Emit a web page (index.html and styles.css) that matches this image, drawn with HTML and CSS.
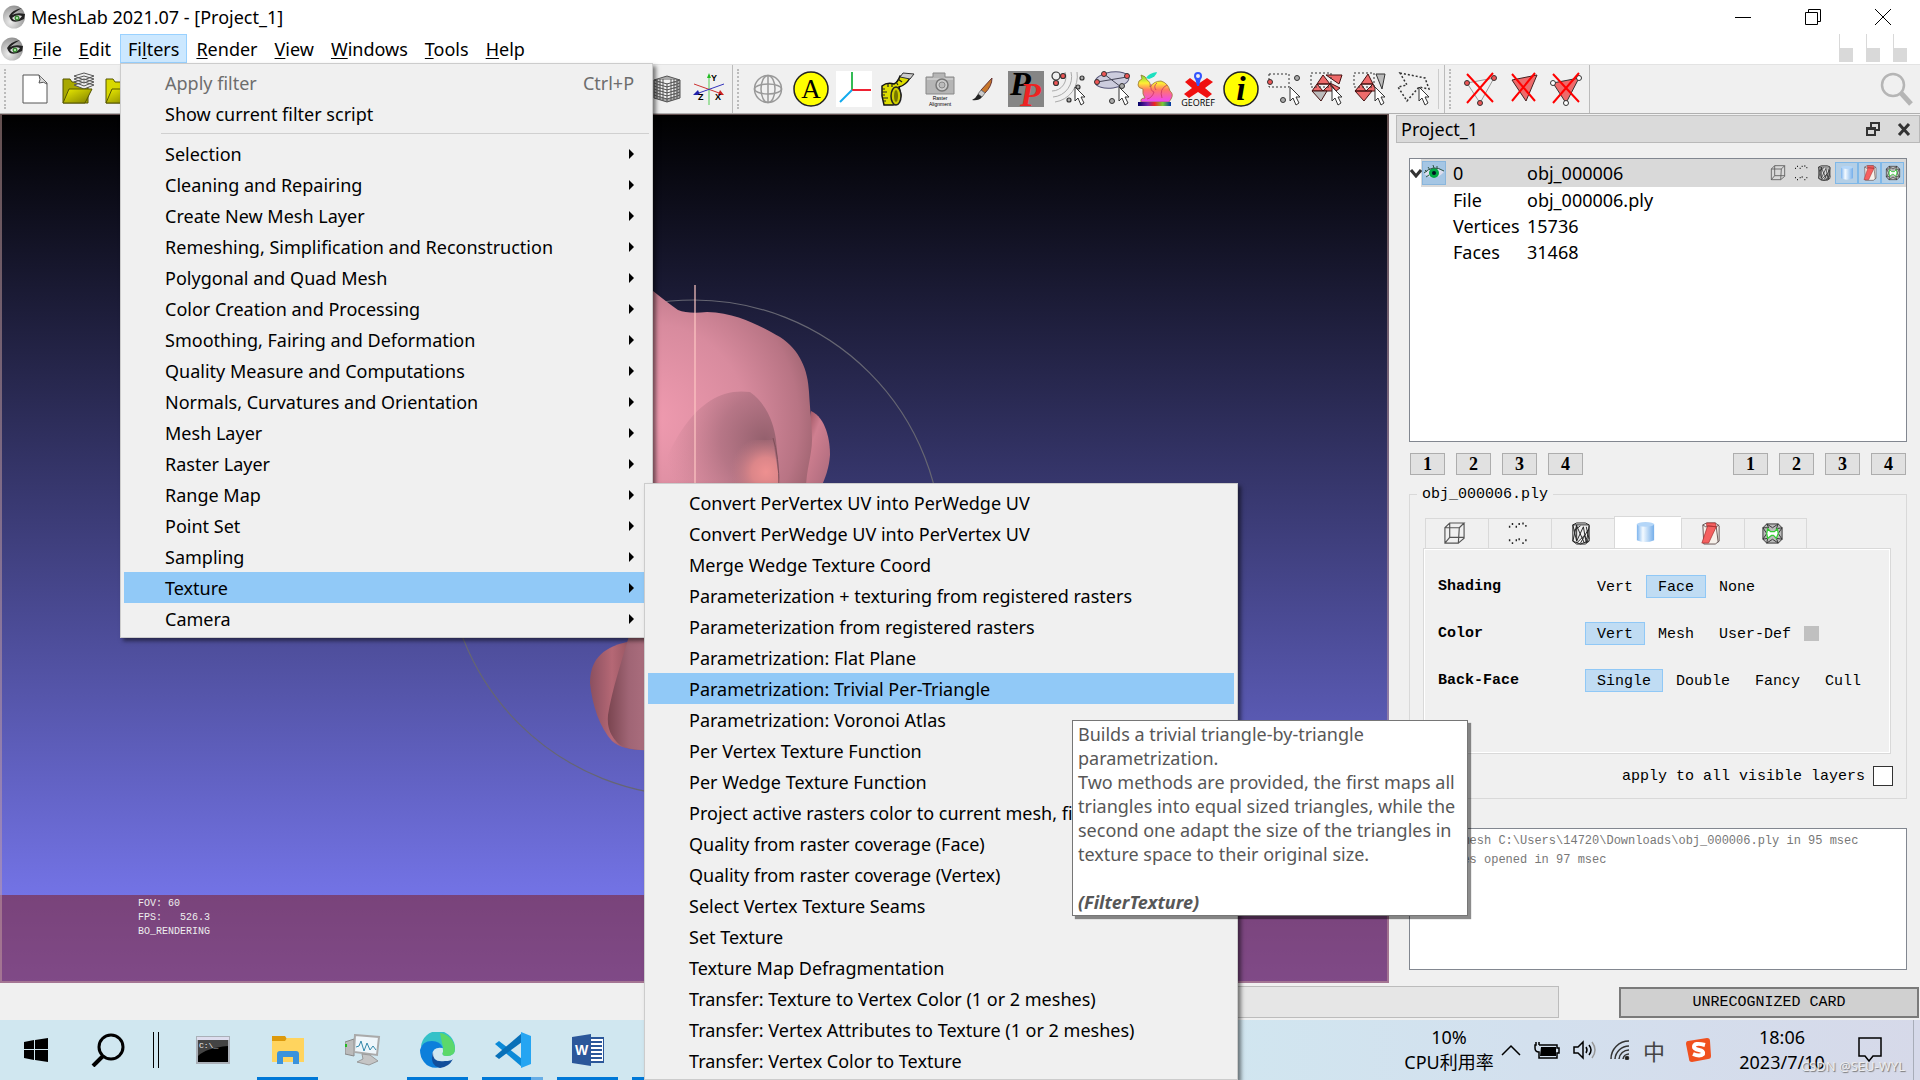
FILE: index.html
```html
<!DOCTYPE html>
<html lang="en">
<head>
    <meta charset="UTF-8">
    <meta name="viewport" content="width=device-width, initial-scale=1.0">
    <title>MeshLab 2021.07 - [Project_1]</title>
    <link rel="stylesheet" href="styles.css">
</head>
<body>
    <!-- shared icons -->
    <svg class="defs" width="0" height="0" aria-hidden="true">
        <defs>
            <radialGradient id="g-logo" cx="35%" cy="70%" r="80%">
                <stop offset="0" stop-color="#eee"/>
                <stop offset="1" stop-color="#888"/>
            </radialGradient>
            <linearGradient id="g-cyl">
                <stop offset="0" stop-color="#7db4ee"/>
                <stop offset=".35" stop-color="#f4faff"/>
                <stop offset="1" stop-color="#74aeea"/>
            </linearGradient>
            <linearGradient id="g-folder" x1="0" y1="0" x2="1" y2="1">
                <stop offset="0" stop-color="#eeee00"/>
                <stop offset="1" stop-color="#7d7d00"/>
            </linearGradient>
            <linearGradient id="g-hue">
                <stop offset="0" stop-color="#006"/>
                <stop offset=".3" stop-color="#72a"/>
                <stop offset=".5" stop-color="#e22"/>
                <stop offset=".75" stop-color="#7c3"/>
                <stop offset="1" stop-color="#03a"/>
            </linearGradient>
            <linearGradient id="g-bunny" x1="0" y1="0" x2="0" y2="1">
                <stop offset="0" stop-color="#7d3"/>
                <stop offset=".3" stop-color="#fe3"/>
                <stop offset=".55" stop-color="#f76"/>
                <stop offset="1" stop-color="#e4f"/>
            </linearGradient>
        </defs>
        <symbol id="logo" viewBox="0 0 24 24">
            <ellipse cx="12" cy="12" rx="11" ry="11.5" fill="url(#g-logo)"/>
            <path d="M7 11Q10 5 20 3Q13 7 10 10Q15 7 23 9L22 14Q15 18 10 16Q8 14 7 11z" fill="#222"/>
            <path d="M10 13Q14 9 20 11Q17 16 12 15z" fill="#ddd"/>
            <circle cx="15" cy="13" r="2.500" fill="#3c8a35"/>
            <circle cx="15" cy="13" r="1" fill="#cfc"/>
        </symbol>
        <symbol id="cube" viewBox="0 0 24 24">
            <path d="M2 6L17 6L16 22H2zM2 6L7 1H22L17 6M22 1V17L16 22M7 1V16H22M7 16L2 22" fill="none" stroke="#555" stroke-width="1.200"/>
        </symbol>
        <symbol id="dots" viewBox="0 0 24 24">
            <path d="M3 5h1.500M6 2h1.500M10 5h1.500M13 2h1.500M17 1.500h1.500M20 4h1.500M3 19h1.500M6 22h1.500M10 19h1.500M13 18h1.500M17 22h1.500M20 19h1.500" stroke="#222" stroke-width="2"/>
        </symbol>
        <symbol id="wire" viewBox="0 0 24 24">
            <path d="M4 3L8 1H17L21 3V20L17 23H8L4 20zM4 3H21M4 3L8 20V3L4 20M8 20L15 5L18 22L21 4M4 20L12 23L20 20L16 14L8 22M12 4L5 9M18 5L21 18M8 4L16 22M20 8L12 22" fill="none" stroke="#222"/>
        </symbol>
        <symbol id="cyl" viewBox="0 0 24 24">
            <path d="M3 3V20Q12 24 21 20V3z" fill="url(#g-cyl)"/>
            <ellipse cx="12" cy="3.500" rx="9" ry="2.500" fill="#b4d6f8"/>
        </symbol>
        <symbol id="tri" viewBox="0 0 24 24">
            <path d="M4 3L8 1H17L21 4V20L17 23H5zM4 3L7 5H18L21 3M18 5L20 21" fill="#f6f0ea" stroke="#655"/>
            <path d="M9 4L18 5L10 22L3 22zM8 1H17L18 5L8 4z" fill="#f56060" stroke="#a33" stroke-width=".8"/>
        </symbol>
        <symbol id="ring" viewBox="0 0 24 24">
            <path d="M6 2H18L22 6V18L18 22H6L2 18V6zM2 6L8 6L6 2L12 6L18 2L16 7L22 6L18 12L22 18L16 17L18 22L12 18L6 22L7 17L2 18L6 12z" fill="#bbb" stroke="#333"/>
            <path d="M7 7L10 10H14L17 7L18 12L16 17L13 14H11L7 17L6 12z" fill="#fff" stroke="#3c3" stroke-width="1.300"/>
        </symbol>
        <symbol id="cursor" viewBox="0 0 12 20">
            <path d="M1 1V15L4 12L7 19L10 17L7 11L11 11z" fill="#fff" stroke="#333"/>
        </symbol>
    </svg>

    <header class="titlebar">
        <svg class="logo"><use href="#logo"/></svg>
        <h1>MeshLab 2021.07 - [Project_1]</h1>
        <div class="win-buttons">
            <button aria-label="Minimize"><svg width="16" height="16"><path d="M0 8.500H16" stroke="#000"/></svg></button>
            <button aria-label="Restore"><svg width="16" height="16" fill="none" stroke="#000"><path d="M.5 3.500H12.500V15.500H.5zM3.500 3V.5H15.500V12.500H13"/></svg></button>
            <button aria-label="Close"><svg width="16" height="16" stroke="#000"><path d="M0 0L16 16M16 0L0 16"/></svg></button>
        </div>
    </header>

    <nav class="menubar">
        <svg class="logo"><use href="#logo"/></svg>
        <button><u>F</u>ile</button>
        <button><u>E</u>dit</button>
        <div class="menu-root">
            <button class="open">Fi<u>l</u>ters</button>
            <ul class="menu">
                <li><button disabled>Apply filter<span>Ctrl+P</span></button></li>
                <li><button>Show current filter script</button></li>
                <li class="separator"></li>
                <li><button class="sub">Selection</button></li>
                <li><button class="sub">Cleaning and Repairing</button></li>
                <li><button class="sub">Create New Mesh Layer</button></li>
                <li><button class="sub">Remeshing, Simplification and Reconstruction</button></li>
                <li><button class="sub">Polygonal and Quad Mesh</button></li>
                <li><button class="sub">Color Creation and Processing</button></li>
                <li><button class="sub">Smoothing, Fairing and Deformation</button></li>
                <li><button class="sub">Quality Measure and Computations</button></li>
                <li><button class="sub">Normals, Curvatures and Orientation</button></li>
                <li><button class="sub">Mesh Layer</button></li>
                <li><button class="sub">Raster Layer</button></li>
                <li><button class="sub">Range Map</button></li>
                <li><button class="sub">Point Set</button></li>
                <li><button class="sub">Sampling</button></li>
                <li class="has-sub">
                    <button class="sub active">Texture</button>
                    <ul class="menu submenu">
                        <li><button>Convert PerVertex UV into PerWedge UV</button></li>
                        <li><button>Convert PerWedge UV into PerVertex UV</button></li>
                        <li><button>Merge Wedge Texture Coord</button></li>
                        <li><button>Parameterization + texturing from registered rasters</button></li>
                        <li><button>Parameterization from registered rasters</button></li>
                        <li><button>Parametrization: Flat Plane</button></li>
                        <li><button class="active">Parametrization: Trivial Per-Triangle</button></li>
                        <li><button>Parametrization: Voronoi Atlas</button></li>
                        <li><button>Per Vertex Texture Function</button></li>
                        <li><button>Per Wedge Texture Function</button></li>
                        <li><button>Project active rasters color to current mesh, filling</button></li>
                        <li><button>Quality from raster coverage (Face)</button></li>
                        <li><button>Quality from raster coverage (Vertex)</button></li>
                        <li><button>Select Vertex Texture Seams</button></li>
                        <li><button>Set Texture</button></li>
                        <li><button>Texture Map Defragmentation</button></li>
                        <li><button>Transfer: Texture to Vertex Color (1 or 2 meshes)</button></li>
                        <li><button>Transfer: Vertex Attributes to Texture (1 or 2 meshes)</button></li>
                        <li><button>Transfer: Vertex Color to Texture</button></li>
                    </ul>
                </li>
                <li><button class="sub">Camera</button></li>
            </ul>
        </div>
        <button><u>R</u>ender</button>
        <button><u>V</u>iew</button>
        <button><u>W</u>indows</button>
        <button><u>T</u>ools</button>
        <button><u>H</u>elp</button>
        <div class="mdi-buttons"><i></i><i></i><i></i></div>
    </nav>

    <div class="toolbar">
        <div class="tools tools-file">
            <button aria-label="New project"><svg viewBox="0 0 36 36"><path d="M6 4H22L30 12V32H6z" fill="#fff" stroke="#555"/><path d="M22 4Q24 9 22 12Q27 10 30 13" fill="#ddd" stroke="#555"/></svg></button>
            <button aria-label="Open project"><svg viewBox="0 0 36 36"><path d="M3 8H10L12 11H28V32H3z" fill="#a8a800" stroke="#550"/><g fill="#eee" stroke="#555"><path d="M14 14L24 18L34 14L24 11zM14 11L24 15L34 11L24 8zM14 8L24 12L34 8L24 5zM14 5L24 9L34 5L24 2z"/></g><path d="M3 32L9 18H32L25 32z" fill="url(#g-folder)" stroke="#550"/></svg></button>
            <button aria-label="Import mesh"><svg viewBox="0 0 36 36"><path d="M3 8H10L12 11H28V32H3z" fill="#d8d800" stroke="#550"/><path d="M3 32L9 18H32L25 32z" fill="url(#g-folder)" stroke="#550"/></svg></button>
            <span class="spacer"></span>
            <button aria-label="Voxel grid"><svg viewBox="0 0 36 36"><path d="M4 9L17 5L30 9V27L17 31L4 27zM4 9L17 13L30 9M17 13V31M4 12L17 16L30 12M4 15L17 19L30 15M4 18L17 22L30 18M4 21L17 25L30 21M4 24L17 28L30 24M7 8V28M10 8V29M13 8V30M21 8V30M24 8V29M27 8V28" fill="#aaa" stroke="#555"/></svg></button>
            <button aria-label="Axes"><svg viewBox="0 0 36 36" font-family="Liberation Sans" font-size="9" font-weight="bold"><path d="M16 34V5" stroke="#5c5"/><path d="M14 7L16 2L18 7z" fill="#2b2"/><path d="M1 13L29 23" stroke="#c33"/><path d="M31 24L25 24L27 19z" fill="#c22"/><path d="M31 13L3 23" stroke="#33b"/><path d="M0 24L5 19L7 24z" fill="#22a"/><text x="18" y="10">Y</text><text x="5" y="29">Z</text><text x="22" y="29">X</text></svg></button>
        </div>

        <div class="tools tools-edit">
            <button aria-label="Trackball"><svg viewBox="0 0 36 36" fill="none" stroke="#999" stroke-width="1.500"><circle cx="18" cy="18" r="13.500"/><ellipse cx="18" cy="18" rx="7" ry="13.500"/><ellipse cx="18" cy="18" rx="13.500" ry="5"/><path d="M18 4V32"/></svg></button>
            <button aria-label="Align"><svg viewBox="0 0 36 36"><circle cx="18" cy="18" r="17" fill="#ff0" stroke="#222" stroke-width="1.500"/><text x="18" y="27" text-anchor="middle" font-family="Liberation Serif" font-size="27">A</text></svg></button>
            <button aria-label="Manipulators"><svg viewBox="0 0 36 36" fill="none" stroke-width="2"><path d="M0 0H36V36H0z" fill="#fff"/><path d="M16 19V1" stroke="#3b5"/><path d="M16 19H35" stroke="#e23"/><path d="M16 19L4 31" stroke="#1ae"/></svg></button>
            <button aria-label="Measure"><svg viewBox="0 0 36 36"><path d="M3 15Q8 11 15 13Q19 11 21 5L31 7Q27 14 20 16L22 24Q21 34 14 34H5L3 25z" fill="#dd0" stroke="#111" stroke-width="1.500"/><path d="M24 2L35 3L31 8L21 6z" fill="#ccc" stroke="#333"/><ellipse cx="17" cy="25" rx="5" ry="9" fill="#cc0" stroke="#222" stroke-width="1.500"/><ellipse cx="17" cy="25" rx="2" ry="6" fill="#770"/><path d="M3 18H6M3 21H8M3 24H6M4 27H9M4 30H7M9 13V16M13 13V16M17 11L19 14M19 8L23 11" stroke="#222" stroke-width="1.200"/></svg></button>
            <button aria-label="Raster alignment"><svg viewBox="0 0 36 36"><path d="M4 6H11V2H23V6H32V23H4z" fill="#b5b5b5" stroke="#888"/><path d="M5 8H31" stroke="#ddd"/><circle cx="20" cy="14" r="6" fill="#ccc" stroke="#777" stroke-width="1.500"/><circle cx="20" cy="14" r="3" fill="#bbb" stroke="#888"/><text x="18" y="29" text-anchor="middle" font-family="Liberation Sans" font-size="5">Raster</text><text x="18" y="35" text-anchor="middle" font-family="Liberation Sans" font-size="5">Alignment</text></svg></button>
            <button aria-label="Paint"><svg viewBox="0 0 36 36"><path d="M27 7L16 19L20 22Q27 15 27 7z" fill="#c8772a" stroke="#633"/><path d="M16 19L20 22L17 26L13 23z" fill="#ccc" stroke="#777"/><path d="M13 23L17 26Q14 30 7 29Q11 27 13 23z" fill="#222"/></svg></button>
            <button aria-label="Pick points"><svg viewBox="0 0 36 36" font-family="Liberation Serif" font-style="italic" font-weight="bold" font-size="34"><path d="M0 0H36V36H0z" fill="#858585"/><text x="2" y="24">P</text><text x="12" y="35" fill="#e22">P</text></svg></button>
            <button aria-label="Point cloud selection"><svg viewBox="0 0 36 36" fill="none" stroke="#aaa"><path d="M20 1A20 20 0 0 1 2 26M14 1A14 14 0 0 1 1 20M26 1A26 26 0 0 1 4 31"/><g stroke="#333" stroke-width="1.200"><circle cx="5" cy="5" r="4" fill="#eee"/><circle cx="12" cy="5" r="2.500" fill="#e55"/><circle cx="5" cy="12" r="2.500" fill="#e55"/><circle cx="31" cy="7" r="2" fill="#aaa"/><circle cx="27" cy="16" r="2" fill="#aaa"/><circle cx="18" cy="29" r="2" fill="#aaa"/></g><use href="#cursor" x="23" y="15" width="12" height="20"/></svg></button>
            <button aria-label="Fitting plane"><svg viewBox="0 0 36 36"><ellipse cx="18" cy="9" rx="17" ry="8" fill="#ccd" stroke="#557" transform="rotate(-8 18 9)"/><path d="M10 3L27 16M3 11L33 6" stroke="#445"/><g stroke="#333"><circle cx="10" cy="3" r="2.500" fill="#e55"/><circle cx="33" cy="5" r="2.500" fill="#e55"/><circle cx="3" cy="11" r="2.500" fill="#e55"/><circle cx="28" cy="15" r="2.500" fill="#aaa"/><circle cx="18" cy="30" r="2.500" fill="#aaa"/></g><use href="#cursor" x="24" y="15" width="12" height="20"/></svg></button>
            <button aria-label="Quality mapper"><svg viewBox="0 0 36 36"><path d="M9 7Q12 2 20 1Q19 6 12 8z" fill="#1de0c0"/><path d="M1 14Q1 9 5 8L4 4Q9 5 10 9Q14 11 13 16Q17 10 24 10Q31 12 33 20Q37 23 34 28L32 31H4Q3 27 8 27Q5 23 6 18Q1 17 1 14z" fill="url(#g-bunny)" stroke="#973" stroke-width=".8"/><path d="M14 13Q13 20 17 21Q15 27 10 28M30 14Q22 18 25 27M20 12Q16 15 19 19" fill="none" stroke="#c36" stroke-width=".8"/><path d="M1 31H34V35H1z" fill="url(#g-hue)"/></svg></button>
            <button aria-label="Georeference"><svg viewBox="0 0 36 36"><path d="M5 11L10 7L18 13L27 7L33 11L25 17L32 23L27 27L18 21L9 27L4 23L12 17z" fill="#f01010"/><circle cx="18" cy="5" r="3" fill="none" stroke="#35f" stroke-width="2"/><path d="M15 7H21L19 15H17z" fill="#35f"/><text x="18" y="35" text-anchor="middle" font-family="Open Sans" font-size="9">GEOREF</text></svg></button>
            <button aria-label="Get info"><svg viewBox="0 0 36 36"><circle cx="18" cy="18" r="17" fill="#ff0" stroke="#222" stroke-width="1.500"/><text x="18" y="29" text-anchor="middle" font-family="Liberation Serif" font-size="34" font-style="italic" font-weight="bold">i</text></svg></button>
            <button aria-label="Select vertices"><svg viewBox="0 0 36 36" fill="none" stroke="#333"><path d="M3 3H23V16H3z" stroke-dasharray="2 2"/><circle cx="4" cy="11" r="2.500" fill="#e55"/><circle cx="31" cy="7" r="2.500" fill="#aaa"/><circle cx="17" cy="29" r="2.500" fill="#aaa"/><use href="#cursor" x="23" y="15" width="12" height="20"/></svg></button>
            <button aria-label="Select connected faces"><svg viewBox="0 0 36 36" stroke="#411"><path d="M14 4L8 13H21zM8 13H21L26 20H3zM8 13L14 20L21 13M17 4H33L30 13zM21 12L31 17L27 20z" fill="#ee6a6a"/><path d="M3 20H18L12 30z" fill="#bbb"/><path d="M2 2H22V16H2z" fill="none" stroke="#333" stroke-dasharray="2 2"/><use href="#cursor" x="22" y="15" width="12" height="20"/></svg></button>
            <button aria-label="Select faces"><svg viewBox="0 0 36 36" stroke="#411"><path d="M16 3L9 13H21zM9 13H21L25 20H3zM9 13L14 20L21 13M3 20H20L12 30z" fill="#ee6a6a"/><path d="M24 3H33L30 18z" fill="#bbb" stroke="#333"/><path d="M2 2H22V16H2z" fill="none" stroke="#333" stroke-dasharray="2 2"/><use href="#cursor" x="22" y="15" width="12" height="20"/></svg></button>
            <button aria-label="Polyline selection"><svg viewBox="0 0 36 36" fill="none" stroke="#333" stroke-width="1.500"><path d="M5 2L30 7L34 18L24 16L12 30L3 16L12 14z" stroke-dasharray="2 2"/><use href="#cursor" x="23" y="15" width="12" height="20" stroke-width="1"/></svg></button>
            <span class="divider"></span>
        </div>

        <div class="tools tools-delete">
            <button aria-label="Delete vertices"><svg viewBox="0 0 36 36" stroke="#333"><path d="M5 12L32 7L18 32z" fill="none" stroke="#999"/><circle cx="5" cy="12" r="2.500" fill="#e55"/><circle cx="32" cy="7" r="2.500" fill="#e55"/><circle cx="18" cy="32" r="2.500" fill="#e55"/><path d="M5 3L31 31M31 2L5 32" stroke="red" stroke-width="2"/></svg></button>
            <button aria-label="Delete faces"><svg viewBox="0 0 36 36"><path d="M7 9L32 4L21 30z" fill="#ee6a6a" stroke="#422"/><path d="M7 3L30 30M30 2L7 30" stroke="red" stroke-width="2"/></svg></button>
            <button aria-label="Delete faces and vertices"><svg viewBox="0 0 36 36" stroke="#333"><path d="M5 12L31 7L18 32z" fill="#ee6a6a"/><circle cx="5" cy="12" r="2.500" fill="#fff"/><circle cx="31" cy="7" r="2.500" fill="#fff"/><circle cx="18" cy="32" r="2.500" fill="#fff"/><path d="M5 3L31 31M31 2L5 32" stroke="red" stroke-width="2"/></svg></button>
        </div>
        <button class="tool-search" aria-label="Search"><svg viewBox="0 0 36 36" fill="none" stroke="#b5b5b5"><circle cx="15" cy="14" r="11" stroke-width="2.500"/><path d="M23 22L33 33" stroke-width="5"/></svg></button>
    </div>

    <main>
        <section class="viewport">
            <svg class="scene" width="1389" height="869" viewBox="0 114 1389 869">
                <defs>
                    <radialGradient id="g-body" gradientUnits="userSpaceOnUse" cx="650" cy="420" r="175">
                        <stop offset="0" stop-color="#f09bb0"/>
                        <stop offset=".55" stop-color="#d88b9e"/>
                        <stop offset=".85" stop-color="#b87484"/>
                        <stop offset="1" stop-color="#99606c"/>
                    </radialGradient>
                    <radialGradient id="g-snout" gradientUnits="userSpaceOnUse" cx="765" cy="440" r="100">
                        <stop offset="0" stop-color="#94606d"/>
                        <stop offset=".45" stop-color="#ad7080" stop-opacity=".8"/>
                        <stop offset="1" stop-color="#c58090" stop-opacity="0"/>
                    </radialGradient>
                    <radialGradient id="g-tip" gradientUnits="userSpaceOnUse" cx="766" cy="472" r="36">
                        <stop offset="0" stop-color="#ee9090"/>
                        <stop offset=".4" stop-color="#dc8689"/>
                        <stop offset="1" stop-color="#c07a84" stop-opacity="0"/>
                    </radialGradient>
                    <linearGradient id="g-ear" x1="0" x2="1" y1="0" y2="1">
                        <stop offset="0" stop-color="#7c3844"/>
                        <stop offset=".4" stop-color="#cf7f90"/>
                        <stop offset="1" stop-color="#a8687a"/>
                    </linearGradient>
                    <linearGradient id="g-foot" x1="0" x2="1">
                        <stop offset="0" stop-color="#8b5060"/>
                        <stop offset=".4" stop-color="#b56875"/>
                        <stop offset="1" stop-color="#7e4652"/>
                    </linearGradient>
                    <linearGradient id="g-leg" x1="0" x2="1">
                        <stop offset="0" stop-color="#7a4550"/>
                        <stop offset=".5" stop-color="#a06575"/>
                        <stop offset="1" stop-color="#ad7080"/>
                    </linearGradient>
                </defs>
                <circle cx="694" cy="548" r="248" fill="none" stroke="#666672" stroke-width="1.200"/>
                <path d="M811 411C826 418 830 440 830 455C829 468 826 476 820 490H800z" fill="url(#g-ear)"/>
                <path d="M630 270L653 291Q668 303 678 310Q688 314 707 312C740 313 763 328 780 337C800 350 808 370 809 392C810 410 812 425 812 440C812 455 806 470 806 490H630z" fill="url(#g-body)"/>
                <path d="M655 490C670 440 700 385 750 392C768 405 774 425 776 440L781 490z" fill="url(#g-snout)"/>
                <path d="M730 490V440H773L781 490z" fill="url(#g-tip)"/>
                <path d="M773 438Q779 455 779 490" fill="none" stroke="#804f59"/>
                <path d="M627 642C600 648 590 662 590 683C592 705 600 728 612 741Q622 750 645 750V638z" fill="url(#g-foot)"/>
                <path d="M629 636C622 660 612 690 608 715Q606 733 620 745Q630 751 650 750V636z" fill="url(#g-leg)"/>
                <path d="M695 285V490" stroke="#ffc8c4" stroke-width="2" opacity=".6"/>
            </svg>
            <pre class="info">FOV: 60
FPS:   526.3
BO_RENDERING</pre>
        </section>

        <aside class="dock">
            <div class="dock-title">
                <h2>Project_1</h2>
                <button aria-label="Float"><svg width="14" height="16" fill="none" stroke="#333" stroke-width="2"><path d="M1 7H9V14H1zM1 8H9M5 6V2H13V9H10"/></svg></button>
                <button aria-label="Close"><svg width="14" height="16" stroke="#333" stroke-width="3"><path d="M2 3L12 14M12 3L2 14"/></svg></button>
            </div>
            <div class="dock-body">
                <div class="layers">
                    <table>
                        <tr class="layer">
                            <td class="toggle">
                                <svg width="12" height="10"><path d="M1 2L6 8L11 2" fill="none" stroke="#333" stroke-width="3"/></svg>
                                <button aria-label="Visibility"><svg width="22" height="22" viewBox="0 0 22 22"><path d="M1 12Q10 2 21 10Q12 20 1 12z" fill="#dde"/><circle cx="11" cy="11" r="5" fill="#0a4"/><circle cx="11" cy="11" r="2" fill="#012"/><path d="M1 11Q10 2 21 9M2 8L4 10M5 5L7 8M10 3L11 6M14 4V7M3 15L6 13" fill="none" stroke="#354"/></svg></button>
                            </td>
                            <td>0</td>
                            <td>
                                <div class="layer-name">
                                    obj_000006
                                    <button aria-label="Bounding box"><svg><use href="#cube"/></svg></button>
                                    <button aria-label="Points"><svg><use href="#dots"/></svg></button>
                                    <button aria-label="Wireframe"><svg><use href="#wire"/></svg></button>
                                    <button class="on" aria-label="Solid"><svg><use href="#cyl"/></svg></button>
                                    <button class="on" aria-label="Selection"><svg><use href="#tri"/></svg></button>
                                    <button class="on" aria-label="Boundary"><svg><use href="#ring"/></svg></button>
                                </div>
                            </td>
                        </tr>
                        <tr><td></td><td>File</td><td>obj_000006.ply</td></tr>
                        <tr><td></td><td>Vertices</td><td>15736</td></tr>
                        <tr><td></td><td>Faces</td><td>31468</td></tr>
                    </table>
                </div>

                <div class="views">
                    <button>1</button>
                    <button>2</button>
                    <button>3</button>
                    <button>4</button>
                    <span class="spacer"></span>
                    <button>1</button>
                    <button>2</button>
                    <button>3</button>
                    <button>4</button>
                </div>

                <fieldset>
                    <legend>obj_000006.ply</legend>
                    <div class="tabs">
                        <button aria-label="Bounding box"><svg><use href="#cube"/></svg></button>
                        <button aria-label="Points"><svg><use href="#dots"/></svg></button>
                        <button aria-label="Wireframe"><svg><use href="#wire"/></svg></button>
                        <button class="current" aria-label="Solid"><svg><use href="#cyl"/></svg></button>
                        <button aria-label="Selection"><svg><use href="#tri"/></svg></button>
                        <button aria-label="Boundary"><svg><use href="#ring"/></svg></button>
                    </div>
                    <div class="pane">
                        <div class="option">
                            <strong>Shading</strong>
                            <button>Vert</button>
                            <button class="on">Face</button>
                            <button>None</button>
                        </div>
                        <div class="option">
                            <strong>Color</strong>
                            <button class="on">Vert</button>
                            <button>Mesh</button>
                            <button>User-Def</button>
                            <span class="swatch"></span>
                        </div>
                        <div class="option">
                            <strong>Back-Face</strong>
                            <button class="on">Single</button>
                            <button>Double</button>
                            <button>Fancy</button>
                            <button>Cull</button>
                        </div>
                    </div>
                    <div class="apply-all">
                        <label for="apply_all">apply to all visible layers</label>
                        <input type="checkbox" id="apply_all">
                    </div>
                </fieldset>

                <div class="log">Opened mesh C:\Users\14720\Downloads\obj_000006.ply in 95 msec<br>All files opened in 97 msec</div>
            </div>
        </aside>
    </main>

    <footer class="statusbar">
        <div class="progress"></div>
        <div class="card">UNRECOGNIZED CARD</div>
    </footer>

    <div class="taskbar">
        <div class="apps">
            <button aria-label="Start"><svg width="24" height="24"><path d="M0 4L10 2V11H0zM11 2L24 0V11H11zM0 12H10V22L0 20zM11 12H24V24L11 22z"/></svg></button>
            <button aria-label="Search"><svg width="34" height="34" fill="none" stroke="#000"><circle cx="20" cy="14" r="12" stroke-width="3"/><path d="M12 23L2 33" stroke-width="4"/></svg></button>
            <span class="bars"></span>
            <button aria-label="Command Prompt"><svg width="34" height="28"><path d="M0 0H34V28H0z" fill="#aab0b8"/><path d="M1 1H33V4H1z" fill="#dde"/><path d="M2 4H32V26H2z"/><path d="M2 4H32V10Q10 12 2 20z" fill="#444"/><text x="3" y="12" fill="#eee" font-family="Liberation Mono" font-size="8">C:\_</text></svg></button>
            <button class="running" aria-label="File Explorer"><svg width="32" height="28"><path d="M0 0H13L15 3V8H0z" fill="#dd9a0c"/><path d="M0 5H13L15 2H32V26H0z" fill="#ffd45e"/><path d="M5 28V18Q5 15 8 15H24Q27 15 27 18V28H21V21H11V28z" fill="#3b93dc"/></svg></button>
            <button aria-label="Resource Monitor"><svg width="36" height="32"><path d="M0 8L9 5V22L0 20z" fill="#bbb" stroke="#888"/><path d="M1 10V13" stroke="#2b2" stroke-width="2"/><path d="M10 1L34 3L32 21L9 18z" fill="#eef6fb" stroke="#aaa" stroke-width="2"/><path d="M11 13L14 12L16 7L19 17L22 9L25 16L28 12L31 16" fill="none" stroke="#38a"/><path d="M17 20L25 21L33 27L24 31L12 28L18 25z" fill="#c5c5c5" stroke="#999"/></svg></button>
            <button class="running" aria-label="Edge"><svg width="36" height="36" viewBox="0 0 36 36"><path d="M1 15A17 17 0 0 1 35 17Q35 24 27 24Q21 24 23 20Q24 13 15 11Q5 10 1 15z" fill="#35c1c8"/><path d="M20 1A17 17 0 0 1 35 17Q35 24 27 24Q21 24 23 20Q24 15 22 11z" fill="#5bd86a"/><path d="M0 18Q2 9 12 9Q20 9 23 16Q13 14 12 23Q13 33 22 35Q10 38 4 30Q0 25 0 18z" fill="#0c7fdb"/><path d="M13 20Q12 31 25 29Q31 29 33 27Q29 35 20 36Q9 33 13 20z" fill="#124f9b"/></svg></button>
            <button class="running stacked" aria-label="Visual Studio Code"><svg width="36" height="36" viewBox="0 0 36 36"><path d="M0 12L4 9L27 27V35z" fill="#0b8ad8"/><path d="M0 24L4 27L27 10V1z" fill="#0870b8"/><path d="M26 0L36 4V32L26 36z" fill="#25a5f2"/></svg></button>
            <button class="running" aria-label="Word"><svg width="32" height="32"><path d="M17 4H32V28H17z" fill="#fff" stroke="#2b579a" stroke-width="2"/><path d="M19 8H30M19 12H30M19 16H30M19 20H30M19 24H30" stroke="#2b579a" stroke-width="2"/><path d="M0 3L19 0V32L0 29z" fill="#2b579a"/><text x="3" y="21" fill="#fff" font-family="Liberation Sans" font-weight="bold" font-size="14">W</text></svg></button>
            <button class="running" aria-label="MeshLab"></button>
        </div>
        <div class="tray">
            <div class="readout cpu">10%<br>CPU利用率</div>
            <svg width="20" height="12" fill="none" stroke="#000" stroke-width="1.500"><path d="M1 11L10 2L19 11"/></svg>
            <svg width="26" height="18"><path d="M5 4H23V7H25V12H23V17H5V11Q1 11 1 7V4H2V1M5 4V1" fill="none" stroke="#000" stroke-width="1.500"/><path d="M7 6H22V15H6z"/></svg>
            <svg width="24" height="20" fill="none" stroke="#000" stroke-width="1.500"><path d="M1 7H5L10 2V18L5 13H1zM13 7Q15 10 13 13M16 5Q20 10 16 15"/><path d="M19 2Q25 10 19 18" stroke="#999"/></svg>
            <svg width="20" height="20" fill="none" stroke="#333" stroke-width="1.500"><path d="M1 19A18 18 0 0 1 19 1M5 19A14 14 0 0 1 19 6M9 19A10 10 0 0 1 19 10M13 19A6 6 0 0 1 19 14"/><circle cx="17" cy="18" r="1.500" fill="#000"/></svg>
            <span class="ime">中</span>
            <svg width="26" height="26"><path d="M2 4L21 1Q24 1 24 4L25 19Q25 22 22 22L6 25Q3 25 3 22L0 7Q0 4 2 4z" fill="#f0501e"/><path d="M19 8Q8 5 8 10Q8 12 13 13Q18 14 17 17Q14 20 7 17" fill="none" stroke="#fff" stroke-width="4"/></svg>
            <div class="readout clock">18:06<br>2023/7/10</div>
            <svg width="24" height="26" fill="none" stroke="#000" stroke-width="1.500"><path d="M1 1H23V19H15L11 24L7 19H1z"/></svg>
        </div>
        <span class="watermark">CSDN @SEU-WYL</span>
    </div>

    <div class="tooltip" role="tooltip">
        <p>Builds a trivial triangle-by-triangle<br>parametrization.<br>Two methods are provided, the first maps all<br>triangles into equal sized triangles, while the<br>second one adapt the size of the triangles in<br>texture space to their original size.</p>
        <em>(FilterTexture)</em>
    </div>
</body>
</html>
```
FILE: styles.css
```css
:root {
    --ui: "Noto Sans", "Noto Sans CJK SC", sans-serif;
    --mono: "Liberation Mono", monospace;
    --panel: #f0f0f0;
    --line: #d9d9d9;
    --highlight: #91c9f7;
    --pressed: #c0dcf3;
    --pressed-line: #90c8f6;
}

* {
    box-sizing: border-box;
}

body {
    margin: 0;
    height: 100vh;
    display: flex;
    flex-direction: column;
    overflow: hidden;
    background: var(--panel);
    color: #000;
    font-family: var(--ui);
    font-size: 18px;
}

button {
    margin: 0;
    padding: 0;
    border: none;
    background: none;
    color: inherit;
    font: inherit;
}

h1, h2, p, ul, pre {
    margin: 0;
    padding: 0;
    font-size: inherit;
    font-weight: normal;
}

svg {
    display: block;
    flex: none;
}

.defs {
    position: absolute;
}

.spacer {
    flex: 1;
}

.logo {
    width: 24px;
    height: 24px;
}

/* title bar */
.titlebar {
    display: flex;
    align-items: center;
    gap: 5px;
    height: 34px;
    padding-left: 2px;
    background: #fff;
}

.win-buttons {
    display: flex;
    margin: 0 2px 0 auto;
}

.win-buttons button {
    display: flex;
    justify-content: center;
    width: 70px;
}

/* menu bar */
.menubar {
    display: flex;
    gap: 1px;
    height: 30px;
    background: #fff;
}

.menubar .logo {
    margin-top: 3px;
}

.menubar > button,
.menu-root > button {
    height: 29px;
    padding: 0 8px;
    line-height: 30px;
}

.menubar u {
    text-underline-offset: 2px;
    text-decoration-thickness: 1px;
}

.menu-root {
    position: relative;
}

.menu-root > .open {
    background: #cce8ff;
    border: 1px solid #99d1ff;
    padding: 0 7px;
    line-height: 28px;
}

.mdi-buttons {
    display: flex;
    gap: 13px;
    margin: 0 13px 0 auto;
}

.mdi-buttons i {
    width: 14px;
    height: 28px;
    border-left: 1px solid var(--line);
    background: linear-gradient(#fff 50%, var(--line) 50%);
}

.menu {
    position: absolute;
    z-index: 10;
    top: 29px;
    left: 0;
    width: 533px;
    padding: 3px;
    list-style: none;
    background: var(--panel);
    border: 1px solid #ccc;
    box-shadow: 3px 3px 4px rgba(0, 0, 0, 0.5);
}

.menu button {
    display: flex;
    align-items: center;
    width: 100%;
    height: 31px;
    padding: 0 15px 0 41px;
    text-align: left;
    white-space: nowrap;
}

.menu button:disabled {
    color: #6d6d6d;
}

.menu button span {
    margin-left: auto;
}

.menu .sub::after {
    content: "";
    margin-left: auto;
    border: 5px solid transparent;
    border-left-color: #000;
    border-right: none;
}

.menu .active {
    background: var(--highlight);
}

.separator {
    height: 9px;
    margin-left: 37px;
    background: linear-gradient(#d0d0d0, #d0d0d0) 0 4px / 100% 1px no-repeat;
}

.has-sub {
    position: relative;
}

.submenu {
    top: -89px;
    left: 520px;
    width: 594px;
}

/* toolbar */
.toolbar {
    display: flex;
    height: 50px;
    border-top: 1px solid #e3e3e3;
    border-bottom: 1px solid #b0b0b0;
}

.tools {
    display: flex;
    align-items: center;
    gap: 7px;
    position: relative;
    padding-left: 17px;
    border-right: 1px solid #bbb;
}

.tools::before {
    content: "";
    position: absolute;
    left: 4px;
    top: 4px;
    bottom: 4px;
    border-left: 2px dotted #bbb;
}

.tools svg,
.tool-search svg {
    width: 36px;
    height: 36px;
    overflow: visible;
}

.tools-file {
    width: 733px;
    padding-right: 3px;
}

.tools-edit,
.tools-delete {
    padding-right: 5px;
}

.divider {
    height: 40px;
    border-left: 1px solid #ccc;
}

.tool-search {
    margin: 0 6px 0 auto;
}

/* main area */
main {
    flex: 1;
    display: flex;
    min-height: 0;
}

.viewport {
    flex: 1;
    position: relative;
    overflow: hidden;
    margin-right: 7px;
    background: linear-gradient(#000, #8080ff);
}

.viewport::after {
    content: "";
    position: absolute;
    inset: 0;
    border: 2px solid rgba(200, 160, 160, 0.5);
    border-top-width: 1px;
}

.scene {
    position: absolute;
    top: 0;
    left: 0;
}

.info {
    position: absolute;
    left: 0;
    right: 0;
    bottom: 0;
    height: 88px;
    padding: 2px 138px;
    background: rgba(128, 20, 16, 0.5);
    color: #eee;
    font-family: var(--mono);
    font-size: 10px;
    line-height: 14px;
}

/* project dock */
.dock {
    display: flex;
    flex-direction: column;
    width: 524px;
    font-family: var(--mono);
    font-size: 15px;
}

.dock-title {
    display: flex;
    align-items: center;
    gap: 17px;
    height: 28px;
    margin-top: 1px;
    padding: 0 8px 0 4px;
    background: #dadada;
    border: 1px solid #b9b9b9;
    font-family: var(--ui);
    font-size: 18px;
}

.dock-title h2 {
    flex: 1;
}

.dock-body {
    flex: 1;
    display: flex;
    flex-direction: column;
    padding: 15px 13px 13px;
}

.layers {
    flex: 1;
    background: #fff;
    border: 1px solid #828790;
}

.layers table {
    width: 100%;
    border-collapse: collapse;
    font-family: var(--ui);
    font-size: 18px;
    line-height: 26px;
}

.layers td {
    padding: 0;
}

.layers td:nth-child(1) {
    width: 43px;
}

.layers td:nth-child(2) {
    width: 74px;
}

.layer {
    height: 28px;
    background: linear-gradient(to right, #fff 11px, var(--line) 11px);
}

.toggle svg,
.toggle button {
    display: inline-block;
    vertical-align: middle;
}

.toggle button {
    width: 24px;
    height: 24px;
    border: 1px solid #8ab6dc;
    background: #a5c6e4;
    line-height: 0;
}

.layer td.toggle {
    line-height: 24px;
    white-space: nowrap;
    font-size: 0;
}

.layer-name {
    display: flex;
    align-items: center;
    padding-right: 2px;
}

.layer-name button {
    display: flex;
    align-items: center;
    justify-content: center;
    width: 23px;
    height: 22px;
    border: 1px solid transparent;
}

.layer-name button:first-of-type {
    margin-left: auto;
}

.layer-name .on {
    border-color: #7fb8e8;
    background: #b4cfe6;
}

.layer-name svg {
    width: 16px;
    height: 16px;
}

.views {
    display: flex;
    gap: 11px;
    margin: 11px 1px 6px;
}

.views button {
    width: 35px;
    height: 22px;
    border: 1px solid #adadad;
    background: #e1e1e1;
    font-family: "Liberation Serif", serif;
    font-size: 18px;
    font-weight: bold;
    line-height: 20px;
}

fieldset {
    min-width: 0;
    margin: 0 0 29px;
    padding: 0 7px 12px;
    border: 1px solid var(--line);
}

legend {
    padding: 2px 5px 0;
    line-height: 24px;
}

.tabs {
    display: flex;
    align-items: flex-end;
    height: 31px;
    margin: 10px 0 0 8px;
}

.tabs button {
    display: flex;
    justify-content: center;
    align-items: center;
    width: 63px;
    height: 30px;
    padding-right: 6px;
    border: 1px solid var(--line);
    border-right: none;
    border-bottom: none;
}

.tabs button:last-child {
    border-right: 1px solid var(--line);
}

.tabs .current {
    width: 67px;
    height: 32px;
    background: #fff;
}

.tabs svg {
    width: 23px;
    height: 23px;
}

.pane {
    display: flex;
    flex-direction: column;
    gap: 24px;
    height: 206px;
    margin: 0 8px 0 6px;
    padding: 26px 14px;
    border: 1px solid var(--line);
    box-shadow: inset 0 0 0 1px #fff;
}

.option {
    display: flex;
    align-items: center;
    gap: 1px;
    height: 23px;
}

.option strong {
    width: 146px;
}

.option button {
    height: 23px;
    padding: 0 11px;
    border: 1px solid transparent;
    line-height: 23px;
}

.option .on {
    background: var(--pressed);
    border-color: var(--pressed-line);
}

.swatch {
    width: 15px;
    height: 15px;
    background: #c0c0c0;
}

.apply-all {
    display: flex;
    justify-content: flex-end;
    align-items: center;
    gap: 8px;
    margin: 12px 6px 0 0;
}

.apply-all input {
    appearance: none;
    width: 20px;
    height: 20px;
    margin: 0;
    background: #fff;
    border: 1px solid #333;
}

.log {
    height: 142px;
    padding: 3px 2px;
    overflow: hidden;
    background: #fff;
    border: 1px solid #828790;
    color: #777;
    font-size: 12px;
    line-height: 19px;
    white-space: nowrap;
}

/* status bar */
.statusbar {
    display: flex;
    justify-content: flex-end;
    height: 37px;
    padding: 3px 1px 2px 1000px;
    font-family: var(--mono);
    font-size: 15px;
}

.progress {
    flex: 1;
    background: #e6e6e6;
    border: 1px solid #bcbcbc;
}

.card {
    width: 300px;
    height: 31px;
    margin: 1px 0 0 60px;
    background: #d0d0d0;
    border: 2px solid #7a7a7a;
    line-height: 28px;
    text-align: center;
}

/* taskbar */
.taskbar {
    display: flex;
    justify-content: space-between;
    position: relative;
    height: 60px;
    background: linear-gradient(to right, #d0e7f0 60%, #d3e0ee 80%, #d6d9e9);
}

.apps {
    display: flex;
}

.apps button {
    display: flex;
    justify-content: center;
    align-items: center;
    width: 61px;
    height: 60px;
    margin-right: 14px;
}

.apps button:nth-child(-n+2) {
    width: 72px;
    margin: 0;
}

.bars {
    width: 6px;
    height: 36px;
    margin: 12px 23px 0 9px;
    border: 1px solid #000;
    border-width: 0 1px;
}

.apps .running {
    border-bottom: 3px solid #0078d7;
    padding-top: 3px;
}

.apps .stacked {
    border-image: linear-gradient(to right, #0078d7 80%, #66ade6 80%) 1;
}

.tray {
    display: flex;
    align-items: center;
    gap: 13px;
    margin-right: 6px;
    padding-right: 31px;
    border-right: 1px solid #a8adb8;
}

.readout {
    width: 92px;
    line-height: 25px;
    text-align: center;
    white-space: nowrap;
}

.cpu {
    margin-right: -7px;
}

.clock {
    margin: 0 17px 0 11px;
}

.ime {
    margin-right: 8px;
    font-family: "Noto Sans CJK SC", sans-serif;
    font-size: 22px;
    line-height: 24px;
    color: #444;
}

.watermark {
    position: absolute;
    right: 15px;
    bottom: 5px;
    color: #eee;
    font-size: 13px;
    line-height: 18px;
    text-shadow: 1px 1px 1px #777;
}

/* filter help */
.tooltip {
    position: absolute;
    z-index: 20;
    top: 720px;
    left: 1072px;
    width: 396px;
    padding: 1px 5px;
    background: #fff;
    border: 1px solid #767676;
    box-shadow: 3px 3px 1px rgba(0, 0, 0, 0.45);
    color: #575757;
    line-height: 24px;
    white-space: nowrap;
}

.tooltip em {
    display: block;
    margin-top: 24px;
    font-weight: bold;
}
```
